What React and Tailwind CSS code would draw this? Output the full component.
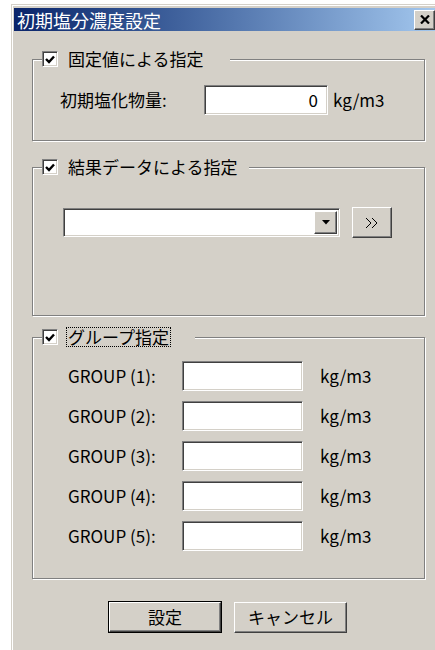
import React from 'react';

// classic 3D bevels
const raised = 'border border-t-white border-l-white border-r-[#404040] border-b-[#404040] shadow-[inset_-1px_-1px_0_#808080]';
const sunken = 'border border-t-[#808080] border-l-[#808080] border-r-white border-b-white shadow-[inset_1px_1px_0_#404040,inset_-1px_-1px_0_#d4d0c8]';
const etched = 'border border-[#808080] shadow-[inset_1px_1px_0_#ffffff,1px_1px_0_#ffffff]';

const Check = () => (
  <span className={`w-[16px] h-[16px] bg-white flex items-center justify-center shrink-0 ${sunken}`}>
    <svg width="10" height="9" viewBox="0 0 10 9">
      <polyline points="1,4 4,7 9,1.5" fill="none" stroke="black" strokeWidth="2.4" />
    </svg>
  </span>
);

const GroupBox = ({ title, focused = false, gapRight, className = '', children }) => (
  <fieldset className={`w-[393px] ml-[18px] pl-[9px] bg-[#d4d0c8] ${etched} ${className}`}>
    <legend className={`h-[18px] flex items-center gap-[9px] bg-[#d4d0c8] ${gapRight}`}>
      <Check />
      <span className={`leading-[18px] px-px ${focused ? 'outline outline-1 outline-dotted outline-black' : ''}`}>{title}</span>
    </legend>
    {children}
  </fieldset>
);

const Field = ({ w, value = '' }) => (
  <div className={`${w} h-[30px] bg-white flex items-center justify-end pr-[9px] ${sunken}`}>{value}</div>
);

const groups = [1, 2, 3, 4, 5];

export default function App() {
  return (
    <div className="w-[435px] h-[650px] overflow-hidden bg-white pt-[4px] font-['Noto_Sans_CJK_JP','Noto_Sans',sans-serif] text-[17px] text-black">
      <div className="ml-[11px] w-[434px] h-[700px] border border-[#d4d0c8] bg-[#d4d0c8]">
        <div className="h-full border border-t-white border-l-white border-r-[#808080] border-b-[#404040] pt-[2px] pl-px pr-px">
          {/* title bar */}
          <div className="h-[23px] bg-linear-to-r from-[#0a246a] to-[#a6caf0] flex items-center justify-between pl-[3px] pr-[7px]">
            <span className="text-white text-[18px] leading-none">初期塩分濃度設定</span>
            <button className={`w-[21px] h-[20px] bg-[#d4d0c8] flex items-center justify-center ${raised}`}>
              <svg width="10" height="9" viewBox="0 0 10 9">
                <path d="M1 0.5 L9 8.5 M9 0.5 L1 8.5" stroke="black" strokeWidth="2.2" />
              </svg>
            </button>
          </div>

          <GroupBox title="固定値による指定" gapRight="pr-[25px]" className="mt-[19px] pb-[25px]">
            <div className="flex items-center pt-[17px] ml-[18px]">
              <span className="w-[144px]">初期塩化物量:</span>
              <Field w="w-[124px]" value="0" />
              <span className="ml-[5px]">kg/m3</span>
            </div>
          </GroupBox>

          <GroupBox title="結果データによる指定" gapRight="pr-[10px]" className="mt-[17px] pb-[77px]">
            <div className="flex items-center pt-[31px] ml-[21px]">
              <div className={`w-[277px] h-[29px] bg-white flex justify-end p-[2px] ${sunken}`}>
                <div className={`w-[23px] h-full bg-[#d4d0c8] flex items-center justify-center ${raised}`}>
                  <svg width="8" height="5" viewBox="0 0 8 5">
                    <polygon points="0,0 8,0 4,4.5" fill="black" />
                  </svg>
                </div>
              </div>
              <button className={`ml-[12px] w-[40px] h-[31px] bg-[#d4d0c8] flex items-center justify-center ${raised}`}>
                <svg width="16" height="12" viewBox="0 0 16 12">
                  <path d="M2 1 L7 6 L2 11 M8 1 L13 6 L8 11" fill="none" stroke="black" strokeWidth="1" />
                </svg>
              </button>
            </div>
          </GroupBox>

          <GroupBox title="グループ指定" focused gapRight="pr-[25px]" className="mt-[12px] pb-[27px]">
            <div className="flex flex-col gap-[10px] pt-[15px] ml-[26px]">
              {groups.map((n) => (
                <div key={n} className="flex items-center">
                  <span className="w-[114px]">GROUP ({n}):</span>
                  <Field w="w-[121px]" />
                  <span className="ml-[17px]">kg/m3</span>
                </div>
              ))}
            </div>
          </GroupBox>

          {/* dialog buttons */}
          <div className="flex items-center gap-[12px] mt-[22px] pl-[94px]">
            <div className="border border-black">
              <button className={`w-[112px] h-[30px] bg-[#d4d0c8] ${raised}`}>設定</button>
            </div>
            <button className={`w-[113px] h-[31px] bg-[#d4d0c8] ${raised}`}>キャンセル</button>
          </div>
        </div>
      </div>
    </div>
  );
}
